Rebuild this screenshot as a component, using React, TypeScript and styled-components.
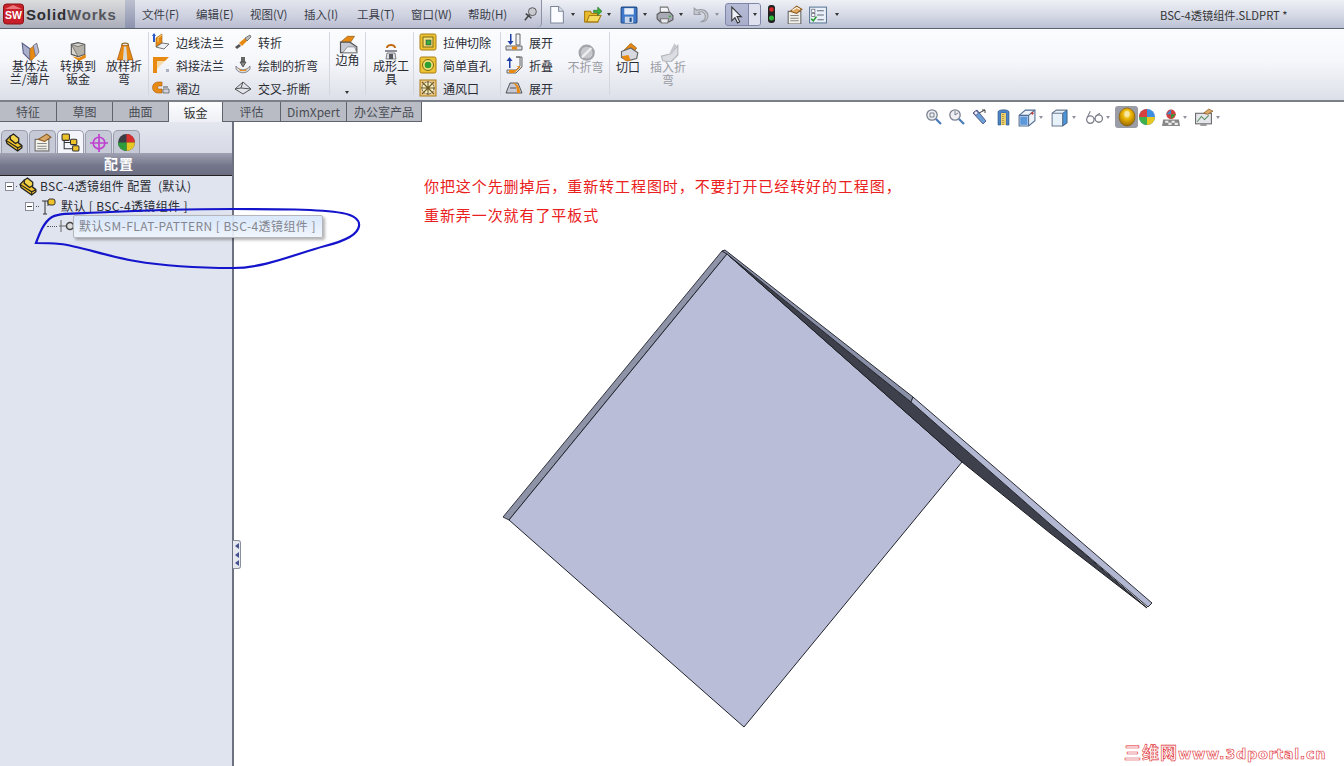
import React from "react";
import styled, { createGlobalStyle } from "styled-components";

const FONT = `"Noto Sans CJK SC", "Liberation Sans", sans-serif`;

const Global = createGlobalStyle`
  html, body { margin: 0; padding: 0; background: #fff; }
  body { font-family: ${FONT}; font-size: 12px; color: #222; }
`;

const Page = styled.div`
  position: relative;
  width: 1344px;
  height: 766px;
  overflow: hidden;
  display: flex;
  flex-direction: column;
  background: #fff;
`;

/* ---------- top bar ---------- */
const TopBar = styled.div`
  height: 28px;
  flex: none;
  display: flex;
  align-items: stretch;
  background: linear-gradient(#eef0f5, #d5d9e6 55%, #bcc2d4);
  border-bottom: 1px solid #5c6470;
`;
const LogoBox = styled.div`
  width: 125px;
  flex: none;
  display: flex;
  align-items: center;
  gap: 2px;
  padding-left: 3px;
  box-sizing: border-box;
  background: linear-gradient(#dcdcde, #bfc1c8 60%, #a9adbb);
`;
const LogoText = styled.span`
  font-family: "Liberation Sans", sans-serif;
  font-size: 15px;
  font-weight: 700;
  letter-spacing: 0.85px;
  color: #55565c;
  & > b {
    color: #2f2f33;
  }
`;
const Divider = styled.div`
  width: 10px;
  flex: none;
  background: linear-gradient(#bcc0d0, #8d93ae);
`;
const MenuStrip = styled.div`
  width: 407px;
  flex: none;
  display: flex;
  align-items: center;
  padding-left: 7px;
  box-sizing: border-box;
  background: linear-gradient(#e4e6ee, #cdd0df 60%, #b9bdd0);
  border-right: 1px solid #8b90a2;
  border-radius: 0 0 5px 0;
`;
const MenuItem = styled.span<{ $w: number }>`
  width: ${(p) => p.$w}px;
  flex: none;
  font-size: 11.5px;
  color: #3a3d48;
  white-space: nowrap;
`;
const QuickBar = styled.div`
  flex: 1;
  display: flex;
  align-items: center;
  padding-left: 5px;
`;
const Slot = styled.span<{ $w: number }>`
  width: ${(p) => p.$w}px;
  flex: none;
  display: flex;
  align-items: center;
  justify-content: flex-start;
`;
const Spacer = styled.span<{ $w?: number }>`
  width: ${(p) => p.$w ?? 5}px;
  flex: none;
`;
const Arrow = styled.span<{ $faint?: boolean }>`
  display: block;
  width: 0;
  height: 0;
  border-left: 2.5px solid transparent;
  border-right: 2.5px solid transparent;
  border-top: 3px solid ${(p) => (p.$faint ? "#8f939f" : "#333")};
  flex: none;
`;
const SelectBtn = styled.span`
  width: 36px;
  height: 23px;
  flex: none;
  display: flex;
  align-items: center;
  box-sizing: border-box;
  border: 1px solid #7f86a8;
  border-radius: 3px;
  background: linear-gradient(#b6bbd6, #a9aecb);
  margin-left: -2px;
  margin-right: 6px;
`;
const SelectArrow = styled.span`
  width: 12px;
  height: 21px;
  margin-left: 3px;
  display: flex;
  align-items: center;
  justify-content: center;
  background: #dfe2ee;
  border-left: 1px solid #7f86a8;
  border-radius: 0 2px 2px 0;
`;
const DocTitle = styled.span`
  position: absolute;
  left: 1160px;
  top: 7px;
  font-size: 11.2px;
  color: #333;
  white-space: nowrap;
`;

/* ---------- ribbon ---------- */
const Ribbon = styled.div`
  height: 73px;
  flex: none;
  display: flex;
  align-items: stretch;
  padding-left: 4px;
  box-sizing: border-box;
  background: linear-gradient(#fbfcfe, #f6f7fb 45%, #dcdfe8);
  border-bottom: 2px solid #7b7f88;
`;
const BigBtn = styled.div<{ $w: number; $off?: boolean; $top?: number; $left?: number }>`
  width: ${(p) => p.$w}px;
  flex: none;
  display: flex;
  flex-direction: column;
  align-items: center;
  padding-top: ${(p) => p.$top ?? 12}px;
  padding-left: ${(p) => p.$left ?? 0}px;
  box-sizing: border-box;
  text-align: center;
  font-size: 12px;
  line-height: 13px;
  color: ${(p) => (p.$off ? "#9a9ca3" : "#2a2c34")};
  position: relative;
`;
const BigLabel = styled.span`
  margin-top: -2px;
`;
const Sep = styled.div<{ $l?: number; $r?: number }>`
  width: 1px;
  flex: none;
  margin: 3px ${(p) => p.$r ?? 0}px 5px ${(p) => p.$l ?? 0}px;
  background: #d4d7e0;
`;
const SmallCol = styled.div<{ $w: number }>`
  width: ${(p) => p.$w}px;
  flex: none;
  display: flex;
  flex-direction: column;
  justify-content: space-between;
  padding: 4px 0 3px;
  box-sizing: border-box;
`;
const SmallRow = styled.div`
  height: 18px;
  display: flex;
  align-items: center;
  gap: 6px;
  font-size: 12px;
  color: #2a2c34;
  white-space: nowrap;
`;
const CornerArrow = styled.span`
  position: absolute;
  bottom: 6px;
  left: 15px;
  display: block;
`;

/* ---------- tabs ---------- */
const TabRow = styled.div`
  height: 20px;
  flex: none;
  display: flex;
  align-items: stretch;
  background: transparent;
  position: relative;
  z-index: 2;
`;
const Tab = styled.div<{ $w: number; $on?: boolean }>`
  width: ${(p) => p.$w}px;
  flex: none;
  box-sizing: border-box;
  display: flex;
  align-items: center;
  justify-content: center;
  font-size: 12px;
  color: ${(p) => (p.$on ? "#333" : "#4a4d55")};
  background: ${(p) => (p.$on ? "linear-gradient(#fdfdfe,#eef0f5)" : "#b9bcc4")};
  border-right: 1px solid #5f636c;
  border-bottom: ${(p) => (p.$on ? "1px solid #8f939c" : "1px solid #5f636c")};
  height: ${(p) => (p.$on ? 21 : 20)}px;
`;

/* ---------- main ---------- */
const Main = styled.div`
  flex: 1;
  display: flex;
  min-height: 0;
`;
const Side = styled.div`
  width: 234px;
  flex: none;
  box-sizing: border-box;
  background: #e0e4ee;
  border-right: 2px solid #6d7180;
  display: flex;
  flex-direction: column;
  position: relative;
  z-index: 3;
`;
const SideTabs = styled.div`
  height: 31px;
  flex: none;
  display: flex;
  align-items: flex-end;
  gap: 1px;
  padding-left: 1px;
  box-sizing: border-box;
  background: linear-gradient(#e5e7ef, #d6d9e4);
`;
const SideTab = styled.div<{ $on?: boolean }>`
  width: 27px;
  height: 23px;
  flex: none;
  display: flex;
  align-items: center;
  justify-content: center;
  box-sizing: border-box;
  border: 1px solid #9a9eae;
  border-bottom: none;
  border-radius: 5px 5px 0 0;
  background: ${(p) => (p.$on ? "#f3f5fa" : "#c6c9d6")};
`;
const SideHeader = styled.div`
  height: 23px;
  flex: none;
  display: flex;
  align-items: center;
  justify-content: center;
  box-sizing: border-box;
  padding: 0 0 2px 6px;
  background: linear-gradient(#a0a2b2, #75788c 55%, #6b6e82);
  border-bottom: 1px solid #222;
  color: #fff;
  font-weight: 700;
  font-size: 14px;
  letter-spacing: 1px;
`;
const Tree = styled.div`
  display: flex;
  flex-direction: column;
`;
const TreeRow = styled.div<{ $indent: number }>`
  height: 20px;
  display: flex;
  align-items: center;
  padding-left: ${(p) => p.$indent}px;
  gap: 2px;
  font-size: 12px;
  color: #2a2c34;
  white-space: pre;
  letter-spacing: 0.35px;
`;
const TreeText = styled.span`
  margin-top: -2px;
`;
const PlusBox = styled.span`
  width: 9px;
  height: 9px;
  box-sizing: border-box;
  border: 1px solid #8a8d98;
  background: #fff;
  display: flex;
  align-items: center;
  justify-content: center;
  flex: none;
  &::after {
    content: "";
    width: 5px;
    height: 1px;
    background: #444;
  }
`;
const Dots = styled.span<{ $w: number }>`
  width: ${(p) => p.$w}px;
  flex: none;
  border-top: 1px dotted #555;
`;
const Tooltip = styled.div`
  position: absolute;
  left: 73px;
  top: 215px;
  width: 250px;
  height: 23px;
  box-sizing: border-box;
  padding: 0 0 2px 5px;
  display: flex;
  align-items: center;
  font-size: 12px;
  letter-spacing: 0.43px;
  color: #83858f;
  white-space: nowrap;
  border: 1px solid #b4b6bc;
  border-radius: 2px;
  background: linear-gradient(rgba(214,230,250,.92), rgba(240,245,252,.92));
  box-shadow: 2px 2px 3px rgba(0,0,0,.3);
  z-index: 5;
`;
const Grip = styled.div`
  position: absolute;
  right: -9px;
  top: 418px;
  width: 8px;
  height: 29px;
  background: #e6e8f0;
  border: 1px solid #8b8f9d;
  border-left: none;
  border-radius: 0 3px 3px 0;
  display: flex;
  flex-direction: column;
  align-items: center;
  justify-content: space-evenly;
  box-sizing: border-box;
`;
const GripArrow = styled.span`
  width: 0;
  height: 0;
  border-top: 3px solid transparent;
  border-bottom: 3px solid transparent;
  border-right: 4px solid #45508c;
`;
const Viewport = styled.div`
  flex: 1;
  position: relative;
  background: #fff;
`;
const HeadsUp = styled.div`
  position: absolute;
  left: 691px;
  top: -16px;
  display: flex;
  align-items: center;
  height: 22px;
`;
const HudSlot = styled.span<{ $w: number; $on?: boolean }>`
  width: ${(p) => p.$w}px;
  height: 22px;
  flex: none;
  display: flex;
  align-items: center;
  gap: 3px;
  box-sizing: border-box;
  ${(p) => p.$on && "background:#9a9ca6; border-radius:3px; justify-content:center;"}
`;
const ModelSvg = styled.svg`
  position: absolute;
  left: -234px;
  top: -122px;
  width: 1344px;
  height: 766px;
`;
const Note = styled.div`
  position: absolute;
  left: 190px;
  top: 50px;
  color: #ea2020;
  font-family: "Noto Sans CJK SC", serif;
  font-size: 15px;
  letter-spacing: 0.92px;
  line-height: 28.5px;
  white-space: nowrap;
`;
const Watermark = styled.div`
  position: absolute;
  left: 890px;
  top: 621px;
  font-family: "DejaVu Sans", sans-serif;
  font-weight: 700;
  font-size: 14.5px;
  letter-spacing: 0.62px;
  line-height: 18px;
  color: #fff;
  -webkit-text-stroke: 0.6px #e02a30;
  white-space: nowrap;
  & > span {
    font-family: "Noto Sans CJK SC", sans-serif;
    font-size: 17px;
    letter-spacing: 1px;
  }
`;
const Scribble = styled.svg`
  position: absolute;
  left: 0;
  top: 0;
  width: 1344px;
  height: 766px;
  pointer-events: none;
  z-index: 6;
`;

/* ---------- drawn icons ---------- */
const Svg: React.FC<{ s?: number; children: React.ReactNode }> = ({ s = 18, children }) => (
  <svg width={s} height={s} viewBox="0 0 18 18" style={{ flex: "none", display: "block" }}>
    {children}
  </svg>
);
const O = "#e88a12";
const Y = "#eec22a";

const SWLogo = () => (
  <svg width="21" height="22" viewBox="0 0 21 22" style={{ flex: "none" }}>
    <rect x="0.5" y="1" width="20" height="20" rx="3" fill="#c8202a" stroke="#8a1216" />
    <path d="M2 6 L10 2 L19 6" fill="#e9767a" />
    <text x="10.5" y="16" textAnchor="middle" fontFamily="Liberation Sans" fontWeight="700" fontSize="10.5" fill="#fff">SW</text>
  </svg>
);
const Pin = () => (
  <Svg s={17}>
    <circle cx="11" cy="6" r="4.2" fill="#c8cad2" stroke="#555" />
    <path d="M8 9 L3 15 M4 8 L10 13" stroke="#444" strokeWidth="1.6" />
  </Svg>
);
const NewDoc = () => (
  <Svg s={19}>
    <path d="M3.5 1.5 H11 L15.5 6 V17 H3.5 Z" fill="#fbfcff" stroke="#7d8798" />
    <path d="M11 1.5 V6 H15.5" fill="#dfe4ee" stroke="#7d8798" />
  </Svg>
);
const OpenFolder = () => (
  <Svg s={19}>
    <path d="M1.5 6 H7 L8.5 8 H14 V16 H1.5 Z" fill="#e9b92e" stroke="#a57d12" />
    <path d="M3.5 16 L6 10 H17 L14 16 Z" fill="#f6db62" stroke="#a57d12" />
    <path d="M10 5 H14 V2 L18 6 L14 10 V7 H10 Z" fill="#3fae3a" stroke="#24742a" strokeWidth=".6" />
  </Svg>
);
const Save = () => (
  <Svg s={19}>
    <rect x="2" y="2" width="15" height="15" rx="1" fill="#3f78c8" stroke="#1f4a88" />
    <rect x="5" y="3" width="9" height="6" fill="#e8eef8" />
    <rect x="5.5" y="11" width="8" height="6" fill="#c8d4e8" />
    <rect x="10" y="12" width="2" height="4" fill="#1f4a88" />
  </Svg>
);
const Printer = () => (
  <Svg s={19}>
    <path d="M5 2 H12 L14 8 H5 Z" fill="#f4f5f8" stroke="#777" />
    <path d="M2 9 L5 7 H14 L17 10 V14 L13 16 H5 L2 13 Z" fill="#a8abb6" stroke="#555" />
    <path d="M5 13 H13 L12 17 H6 Z" fill="#e8eaf0" stroke="#777" />
    <rect x="13" y="10" width="2" height="1.5" fill="#3fae3a" />
  </Svg>
);
const Undo = () => (
  <Svg s={19}>
    <path d="M3 3 V9 H9 L7 7 C10 5.5 13 7 13.5 10 C14 13 12 15 9 16 C14 16 17 13 16 9 C15 5 10 3 5.5 5 Z" fill="#c7c9d0" stroke="#9a9ca4" />
  </Svg>
);
const Cursor = () => (
  <Svg s={19}>
    <path d="M5.5 2 V15 L8.5 12 L11 17 L13 16 L10.5 11 H14.5 Z" fill="#eef0f8" stroke="#333" />
  </Svg>
);
const Light = () => (
  <svg width="9" height="20" viewBox="0 0 9 20" style={{ flex: "none" }}>
    <rect x="1" y="1" width="7" height="18" rx="3" fill="#222" />
    <circle cx="4.5" cy="5.5" r="2.3" fill="#d8262a" />
    <circle cx="4.5" cy="14" r="2.5" fill="#2eb63a" />
  </svg>
);
const Options = () => (
  <Svg s={19}>
    <rect x="3" y="6" width="12" height="12" fill="#f1f0e8" stroke="#666" />
    <path d="M5 10 H13 M5 12.5 H13 M5 15 H13" stroke="#888" />
    <path d="M5 6 L11 1 L16 4 L11 8 Z" fill="#e0a860" stroke="#8a5a20" />
    <path d="M7 5 L11 2.5 L14 4" stroke="#fff" fill="none" />
  </Svg>
);
const Checklist = () => (
  <Svg s={19}>
    <rect x="1.5" y="2" width="16" height="15" fill="#e8f0f8" stroke="#5c7a98" />
    <rect x="3.5" y="4" width="3" height="3" fill="#fff" stroke="#667" strokeWidth=".7" />
    <rect x="3.5" y="8" width="3" height="3" fill="#fff" stroke="#667" strokeWidth=".7" />
    <path d="M3 13 L5 15 L8 11" stroke="#2a9a30" strokeWidth="1.5" fill="none" />
    <path d="M8.5 5.5 H15 M8.5 9.5 H15 M9 14 H15" stroke="#667" />
  </Svg>
);

const BaseFlange = () => (
  <Svg s={20}>
    <path d="M2 2 L9 7 V17 L3 11 Z" fill="#a8aecb" stroke="#5d6288" />
    <path d="M9 7 L15 2 L17 10 L11 17 L9 17 Z" fill={O} stroke="#a86a20" strokeWidth=".5" />
    <path d="M12 4 L15 2 L17 10 L14 14 Z" fill="#b9bdd4" stroke="#5d6288" strokeWidth=".6" />
  </Svg>
);
const Convert = () => (
  <Svg s={20}>
    <path d="M3 3 L9 1.5 L15 3 V12 L9 14 L3 12 Z" fill="#d8d6ce" stroke="#555" />
    <path d="M3 3 L9 5 L15 3 V12 L9 14 Z" fill="#b4b2a8" stroke="#555" strokeWidth=".6" />
    <path d="M4 14 L10 18 L16 15 L16 12 L10 15 Z" fill={O} />
  </Svg>
);
const Loft = () => (
  <Svg s={20}>
    <ellipse cx="10" cy="3.5" rx="3" ry="1.6" fill="#f0f0e8" stroke="#8a6a30" />
    <path d="M7 4 L3 17 H17 L13 4 Z" fill={O} stroke="#a85a10" strokeWidth=".7" />
    <path d="M9 5 L8 17 H12 L11 5 Z" fill="#d8d8d4" />
  </Svg>
);
const EdgeFlange = () => (
  <Svg>
    <path d="M2 0 L4 3 H3 V9 H1 V3 H0 Z" fill="#2a58c8" />
    <path d="M4 5 L10 1 V10 L4 14 Z" fill={O} stroke="#9a5a10" strokeWidth=".6" />
    <path d="M10 2 L6 5 V9" stroke="#f8d070" fill="none" />
    <path d="M4 14 L10 10 L17 11 L12 16 Z" fill="#eef0f4" stroke="#555" strokeWidth=".8" />
  </Svg>
);
const MiterFlange = () => (
  <Svg>
    <path d="M1 1 H17 L13 5 H5 V17 H1 Z" fill={O} />
    <path d="M5 5 H13 L5 13 Z" fill="#f5d9a8" />
    <path d="M14 13 L17 13 L17 16 L14 16 Z" fill="#aab0c0" />
  </Svg>
);
const Hem = () => (
  <Svg>
    <path d="M10 3 H6 A5.5 5.5 0 0 0 6 14 H10 V10 H6.5 A1.8 1.8 0 0 1 6.5 7 H10 Z" fill={O} stroke="#a85a10" strokeWidth=".6" />
    <path d="M11 10 H17 V14 H11 Z" fill="#cfd2dc" stroke="#555" strokeWidth=".7" />
    <path d="M11 8 H16" stroke="#555" />
  </Svg>
);
const Jog = () => (
  <Svg>
    <path d="M1 14 L5 11 L7 13 L3 16 Z" fill="#555" />
    <path d="M5 10 L11 5 L13 8 L8 13 Z" fill={O} />
    <path d="M11 5 L16 2 L17 4 L13 8 Z" fill="#bbb" stroke="#555" strokeWidth=".7" />
  </Svg>
);
const SketchedBend = () => (
  <Svg>
    <rect x="7" y="1" width="4" height="5" fill="#666" />
    <path d="M6 6 H12 L9 11 Z" fill="#888" stroke="#333" strokeWidth=".7" />
    <path d="M2 10 C5 15 13 15 16 10 L16 13 C13 18 5 18 2 13 Z" fill="#d7dbe4" stroke="#666" strokeWidth=".7" />
    <path d="M5 12 C7 15 11 15 13 12 L12 15 H6 Z" fill={O} />
  </Svg>
);
const CrossBreak = () => (
  <Svg>
    <path d="M1 10 L9 3 L17 10 L9 15 Z" fill="#e2e4ec" stroke="#555" />
    <path d="M9 3 L7 9 L17 10 M7 9 L1 10" stroke="#555" fill="none" />
  </Svg>
);
const Corners = () => (
  <Svg s={21}>
    <path d="M3 7 L9 2 H15 L11 8 Z" fill={O} stroke="#8a5a10" strokeWidth=".6" />
    <path d="M3 7 H11 L17 11 V16 H3 Z" fill="#c6c8d4" stroke="#555" />
    <path d="M5 16 L9 11 H15 L17 16 Z" fill="#f1f2f6" stroke="#777" strokeWidth=".6" />
  </Svg>
);
const Forming = () => (
  <Svg>
    <path d="M5 5 A4 3 0 0 1 13 5" stroke="#c06a10" strokeWidth="2" fill="none" />
    <path d="M3 7 H15 V9 H3 Z" fill="#8d909a" />
    <path d="M5 10 H13 L14 16 H4 Z" fill="#dfe1e8" stroke="#555" strokeWidth=".7" />
    <rect x="7" y="11" width="4" height="5" fill="#55585f" />
  </Svg>
);
const ExtrudeCut = () => (
  <Svg>
    <rect x="1" y="1" width="16" height="16" rx="1.5" fill="#edc234" stroke="#a67c10" />
    <rect x="4" y="4" width="10" height="10" fill="#f3e07a" stroke="#7c6a10" />
    <rect x="7" y="7" width="5" height="5" fill="#3caa3a" stroke="#235" strokeWidth=".5" />
  </Svg>
);
const SimpleHole = () => (
  <Svg>
    <rect x="1" y="1" width="16" height="16" rx="1.5" fill="#edc234" stroke="#a67c10" />
    <circle cx="9" cy="9" r="5.5" fill="#f3e07a" stroke="#7c6a10" />
    <circle cx="9" cy="9" r="3.3" fill="#2ea032" />
  </Svg>
);
const Vent = () => (
  <Svg>
    <rect x="1" y="1" width="16" height="16" fill="#eec88a" stroke="#a67c10" />
    <circle cx="9" cy="9" r="6" fill="#f6efc8" stroke="#555" strokeDasharray="2 1" />
    <path d="M3 3 L15 15 M15 3 L3 15 M9 2 V16 M2 9 H16" stroke="#6d5a20" strokeWidth="1.1" />
  </Svg>
);
const Unfold = () => (
  <Svg>
    <path d="M5 1 V8 H2.5 L5.5 12 L8.5 8 H6.5 V1 Z" fill="#1e3fa8" />
    <path d="M11 1 H15 V12 H11 Z" fill="#f1f2f6" stroke="#666" />
    <path d="M1 13 H17 V17 H1 Z" fill="#d8dae2" stroke="#666" />
    <rect x="7" y="13.5" width="5" height="3" fill={O} />
  </Svg>
);
const Fold = () => (
  <Svg>
    <path d="M4 12 V5 H1.5 L4.5 1 L7.5 5 H5.5 V12 Z" fill="#1e3fa8" />
    <path d="M11 1 H15 V10 L11 14 H2 V17 H11 L17 11 V1 Z" fill="#e4e6ee" stroke="#666" />
    <path d="M11 10 L15 10 L11 14 H4 V17 H9 L16 11 Z" fill={O} />
  </Svg>
);
const Unfold2 = () => (
  <Svg>
    <path d="M1 14 L5 4 H13 L17 14 Z" fill="#c7cad6" stroke="#555" />
    <path d="M7 4 C11 5 12 9 12 14 H15 C15 9 13 5 9 4 Z" fill={O} />
    <path d="M5 9 H11" stroke="#555" />
  </Svg>
);
const NoBend = () => (
  <Svg s={21}>
    <path d="M3 10 L10 3 L17 9 L10 17 Z" fill="#c6c8ce" />
    <circle cx="10" cy="10" r="6" fill="none" stroke="#a3a5ab" strokeWidth="2" />
    <path d="M6 14 L14 6" stroke="#eee" strokeWidth="2" />
  </Svg>
);
const Rip = () => (
  <Svg s={21}>
    <path d="M5 8 L11 2 L16 6 L12 11 Z" fill={O} stroke="#8a5a10" strokeWidth=".6" />
    <path d="M3 9 L11 6 L17 10 L16 15 L8 17 L3 14 Z" fill="#d8d9e0" stroke="#666" />
    <path d="M3 13 L9 12 L11 17 L6 17 Z" fill={O} />
  </Svg>
);
const InsertBend = () => (
  <Svg s={21}>
    <path d="M3 13 L11 11 L17 4 L17 12 L11 18 L4 17 Z" fill="#dcdde2" stroke="#b4b6bc" />
    <path d="M10 10 L14 2 L16 4 L12 11 Z" fill="#c6c8d0" />
  </Svg>
);
const TreeIcon = ({ s = 19 }: { s?: number }) => (
  <Svg s={s}>
    <path d="M1 7 L5 3 L16 12 V14 L12 17 L2 10 Z" fill={Y} stroke="#222" strokeWidth="1.2" />
    <path d="M5 3 L8 1 L13 5 V8 L10 10 L5 6 Z" fill="#f4d44a" stroke="#222" strokeWidth="1.2" />
    <path d="M1 7 L12 14 L16 12 M12 14 V17" fill="none" stroke="#222" />
  </Svg>
);
const PropIcon = () => (
  <Svg s={19}>
    <rect x="2" y="6" width="13" height="11" fill="#f4f3ea" stroke="#666" />
    <path d="M4 10 H13 M4 12.5 H13 M4 15 H13" stroke="#888" />
    <path d="M5 6 L13 1 L17 4 L11 8 Z" fill="#d8a868" stroke="#8a5a20" />
  </Svg>
);
const ConfigIcon = ({ s = 19 }: { s?: number }) => (
  <Svg s={s}>
    <path d="M3 4 V15 H11 M3 9 H11" stroke="#333" fill="none" />
    <rect x="1" y="1" width="7" height="6" rx="1" fill={Y} stroke="#333" />
    <rect x="9" y="6" width="6" height="5" rx="1" fill={Y} stroke="#333" />
    <rect x="11" y="12" width="6" height="5" rx="1" fill={Y} stroke="#333" />
  </Svg>
);
const Crosshair = () => (
  <Svg s={19}>
    <circle cx="9.5" cy="9.5" r="5.5" fill="none" stroke="#c040d0" strokeWidth="1.6" />
    <path d="M9.5 1 V18 M1 9.5 H18" stroke="#c040d0" strokeWidth="1.6" />
  </Svg>
);
const ColorBall = ({ s = 19 }: { s?: number }) => (
  <Svg s={s}>
    <circle cx="9" cy="9" r="8" fill="#3c3c44" />
    <path d="M9 1 A8 8 0 0 1 17 9 L9 9 Z" fill="#d83030" />
    <path d="M17 9 A8 8 0 0 1 9 17 L9 9 Z" fill="#e6c820" />
    <path d="M9 17 A8 8 0 0 1 1 9 L9 9 Z" fill="#2e9c3a" />
  </Svg>
);
const BrightBall = () => (
  <Svg s={18}>
    <circle cx="9" cy="9" r="8" fill="#3f8fe0" />
    <path d="M9 1 A8 8 0 0 0 1 9 L9 9 Z" fill="#d84040" />
    <path d="M17 9 A8 8 0 0 1 9 17 L9 9 Z" fill="#e6c820" />
    <path d="M9 17 A8 8 0 0 1 1 9 L9 9 Z" fill="#3fb04a" />
  </Svg>
);
const DefaultCfg = () => (
  <svg width="15" height="17" viewBox="0 0 15 17" style={{ flex: "none" }}>
    <path d="M1 3 H7 M4 3 V16 M2 16 H6" stroke="#333" fill="none" />
    <path d="M7 3 V8" stroke="#333" />
    <rect x="7" y="1" width="7" height="6" rx="2" fill={Y} stroke="#333" />
  </svg>
);
const SubCfg = () => (
  <svg width="16" height="14" viewBox="0 0 16 14" style={{ flex: "none" }}>
    <path d="M2 1 V13" stroke="#666" />
    <path d="M0 7 H8" stroke="#666" />
    <circle cx="11" cy="7" r="3.5" fill="#ddd" stroke="#444" strokeWidth="1.5" />
  </svg>
);

/* heads-up view icons */
const Magnifier = ({ inner }: { inner?: React.ReactNode }) => (
  <Svg s={18}>
    <circle cx="7" cy="7" r="5.2" fill="#eef0f4" stroke="#7a808e" strokeWidth="1.3" />
    {inner}
    <path d="M11 11 L16 16" stroke="#4a7ab8" strokeWidth="2.2" />
  </Svg>
);
const PrevView = () => (
  <Svg s={18}>
    <path d="M2 5 L6 2 L15 13 L12 16 Z" fill="#6ea0d8" stroke="#336" strokeWidth=".7" />
    <path d="M8 5 L14 2 M14 2 L11 2 M14 2 L14 5" stroke="#444" fill="none" />
    <circle cx="5" cy="5" r="2" fill="#eef" stroke="#336" strokeWidth=".6" />
  </Svg>
);
const Section = () => (
  <Svg s={18}>
    <path d="M3 4 C3 1 14 1 14 4 V17 H11 V5 H6 V17 H3 Z" fill="#4e84c4" stroke="#27527e" strokeWidth=".6" />
    <path d="M6 5 H11 V17 H6 Z" fill="#e9cf70" />
    <path d="M8 6 V17" stroke="#8a6a10" strokeDasharray="1 1" />
  </Svg>
);
const ViewOrient = () => (
  <Svg s={19}>
    <path d="M2 7 L8 2 H17 V12 L11 17 H2 Z" fill="#eef3fa" stroke="#4e6a90" />
    <path d="M2 7 H11 V17 M11 7 L17 2" stroke="#4e6a90" fill="none" />
    <path d="M3 8 H10 V16 H3 Z" fill="#5d98da" />
    <path d="M13 5 H16 M14.5 3.5 V6.5" stroke="#c83030" />
  </Svg>
);
const Cube = () => (
  <Svg s={19}>
    <path d="M2 5 L6 2 H16 V14 L12 17 H2 Z" fill="#e8f2fb" stroke="#6a7a90" />
    <path d="M12 5 L16 2 V14 L12 17 Z" fill="#4e94d8" stroke="#27527e" strokeWidth=".6" />
    <path d="M2 5 H12 V17" stroke="#6a7a90" fill="none" />
  </Svg>
);
const Glasses = () => (
  <Svg s={19}>
    <circle cx="6" cy="11" r="3.5" fill="#fff" stroke="#7a7d88" strokeWidth="1.2" />
    <circle cx="14" cy="10" r="3.5" fill="#fff" stroke="#7a7d88" strokeWidth="1.2" />
    <path d="M9.5 10 H10.5 M3 9 L6 3 M11 8 L15 5" stroke="#7a7d88" fill="none" />
  </Svg>
);
const GoldBall = () => (
  <svg width="18" height="20" viewBox="0 0 18 20" style={{ flex: "none" }}>
    <defs>
      <radialGradient id="gb" cx="50%" cy="35%" r="65%">
        <stop offset="0" stopColor="#fff3a0" />
        <stop offset=".45" stopColor="#e8b000" />
        <stop offset="1" stopColor="#9a6a00" />
      </radialGradient>
    </defs>
    <ellipse cx="9" cy="10" rx="8" ry="9" fill="url(#gb)" stroke="#7a5200" strokeWidth=".6" />
    <ellipse cx="9" cy="7" rx="2.5" ry="3" fill="#f8e8a8" />
  </svg>
);
const Scene = () => (
  <Svg s={19}>
    <circle cx="9.5" cy="6" r="4.5" fill="#d04040" />
    <path d="M5 6 L9.5 1.5 V6 Z" fill="#3c8ad0" />
    <path d="M9.5 6 H14 L9.5 10.5 Z" fill="#2e9c3a" />
    <path d="M2 11 H17 L18 17 H1 Z" fill="#888" />
    <path d="M4 12 H7 V14 H4 Z M10 12 H13 V14 H10 Z M7 14 H10 V16 H7 Z M13 14 H16 V16 H13 Z" fill="#eee" />
  </Svg>
);
const Display = () => (
  <Svg s={19}>
    <rect x="1.5" y="5" width="15" height="10" fill="#e4e6ec" stroke="#666" />
    <path d="M3 13 L7 8 L10 11 L14 7" stroke="#5a8a5a" fill="none" />
    <path d="M6 15 H12 V17 H6 Z" fill="#999" />
    <path d="M9 5 L14 1 L18 3 L13 6 Z" fill="#d8a868" stroke="#8a5a20" strokeWidth=".7" />
  </Svg>
);

const menus: [string, number][] = [
  ["文件(F)", 54], ["编辑(E)", 54], ["视图(V)", 54], ["插入(I)", 53],
  ["工具(T)", 54], ["窗口(W)", 57], ["帮助(H)", 54],
];
const tabs: [string, number, boolean?][] = [
  ["特征", 57], ["草图", 56], ["曲面", 56], ["钣金", 54, true], ["评估", 58], ["DimXpert", 66], ["办公室产品", 75],
];

export default function App() {
  return (
    <Page>
      <Global />
      <TopBar>
        <LogoBox>
          <SWLogo />
          <LogoText><b>Solid</b>Works</LogoText>
        </LogoBox>
        <Divider />
        <MenuStrip>
          {menus.map(([t, w]) => (
            <MenuItem key={t} $w={w}>{t}</MenuItem>
          ))}
          <Pin />
        </MenuStrip>
        <QuickBar>
          <Slot $w={36}><NewDoc /><Spacer /><Arrow /></Slot>
          <Slot $w={36}><OpenFolder /><Spacer /><Arrow /></Slot>
          <Slot $w={36}><Save /><Spacer /><Arrow /></Slot>
          <Slot $w={36}><Printer /><Spacer /><Arrow /></Slot>
          <Slot $w={36}><Undo /><Spacer /><Arrow $faint /></Slot>
          <SelectBtn>
            <Cursor />
            <SelectArrow><Arrow /></SelectArrow>
          </SelectBtn>
          <Slot $w={18}><Light /></Slot>
          <Slot $w={23}><Options /></Slot>
          <Slot $w={32}><Checklist /><Spacer $w={8} /><Arrow /></Slot>
        </QuickBar>
        <DocTitle>BSC-4透镜组件.SLDPRT *</DocTitle>
      </TopBar>

      <Ribbon>
        <BigBtn $w={52}><BaseFlange /><BigLabel>基体法<br />兰/薄片</BigLabel></BigBtn>
        <BigBtn $w={44}><Convert /><BigLabel>转换到<br />钣金</BigLabel></BigBtn>
        <BigBtn $w={48}><Loft /><BigLabel>放样折<br />弯</BigLabel></BigBtn>
        <Sep $r={3} />
        <SmallCol $w={82}>
          <SmallRow><EdgeFlange />边线法兰</SmallRow>
          <SmallRow><MiterFlange />斜接法兰</SmallRow>
          <SmallRow><Hem />褶边</SmallRow>
        </SmallCol>
        <SmallCol $w={95}>
          <SmallRow><Jog />转折</SmallRow>
          <SmallRow><SketchedBend />绘制的折弯</SmallRow>
          <SmallRow><CrossBreak />交叉-折断</SmallRow>
        </SmallCol>
        <Sep />
        <BigBtn $w={35} $top={5}>
          <Corners />
          <BigLabel>边角</BigLabel>
          <CornerArrow><Arrow /></CornerArrow>
        </BigBtn>
        <Sep />
        <BigBtn $w={47} $top={14} $left={3}><Forming /><BigLabel>成形工<br />具</BigLabel></BigBtn>
        <Sep $r={5} />
        <SmallCol $w={81}>
          <SmallRow><ExtrudeCut />拉伸切除</SmallRow>
          <SmallRow><SimpleHole />简单直孔</SmallRow>
          <SmallRow><Vent />通风口</SmallRow>
        </SmallCol>
        <Sep $r={4} />
        <SmallCol $w={47}>
          <SmallRow><Unfold />展开</SmallRow>
          <SmallRow><Fold />折叠</SmallRow>
          <SmallRow><Unfold2 />展开</SmallRow>
        </SmallCol>
        <BigBtn $w={57} $off $top={12} $left={10}><NoBend /><BigLabel>不折弯</BigLabel></BigBtn>
        <Sep />
        <BigBtn $w={36} $top={12}><Rip /><BigLabel>切口</BigLabel></BigBtn>
        <BigBtn $w={44} $off $top={12}><InsertBend /><BigLabel>插入折<br />弯</BigLabel></BigBtn>
      </Ribbon>

      <TabRow>
        {tabs.map(([t, w, on]) => (
          <Tab key={t} $w={w} $on={on}>{t}</Tab>
        ))}
      </TabRow>

      <Main>
        <Side>
          <SideTabs>
            <SideTab><TreeIcon /></SideTab>
            <SideTab><PropIcon /></SideTab>
            <SideTab $on><ConfigIcon /></SideTab>
            <SideTab><Crosshair /></SideTab>
            <SideTab><ColorBall /></SideTab>
          </SideTabs>
          <SideHeader>配置</SideHeader>
          <Tree>
            <TreeRow $indent={5}>
              <PlusBox /><Dots $w={1} /><TreeIcon /><TreeText>BSC-4透镜组件 配置  (默认)</TreeText>
            </TreeRow>
            <TreeRow $indent={25}>
              <PlusBox /><Dots $w={3} /><DefaultCfg /><TreeText> 默认 [ BSC-4透镜组件 ]</TreeText>
            </TreeRow>
            <TreeRow $indent={47}>
              <Dots $w={10} /><SubCfg />
            </TreeRow>
          </Tree>
          <Grip><GripArrow /><GripArrow /><GripArrow /></Grip>
        </Side>
        <Viewport>
          <ModelSvg viewBox="0 0 1344 766">
            <polygon points="503,517 722,251 727,254 509,520" fill="#8e93a8" stroke="#33363f" strokeWidth="1" />
            <polygon points="509,520 727,254 962,462 744,727" fill="#b9bdd8" stroke="#22242c" strokeWidth="1" />
            <polygon points="727,254 962,462 1050,533 1147,608 1050,524 911,402" fill="#3e414c" stroke="#1c1e24" strokeWidth="1" />
            <polygon points="722,251 725,250 913,397 911,402 727,254" fill="#8a90a8" stroke="#2a2c34" strokeWidth="1" />
            <polygon points="913,397 1152,603 1148,607 1050,524 911,402" fill="#b2b7d2" stroke="#2a2c34" strokeWidth="1" />
          </ModelSvg>
          <HeadsUp>
            <HudSlot $w={23}><Magnifier inner={<path d="M5 5 H9 V9 H5 Z" fill="none" stroke="#7a808e" />} /></HudSlot>
            <HudSlot $w={23}><Magnifier inner={<path d="M7 3 V7 L10 5" fill="none" stroke="#7a808e" />} /></HudSlot>
            <HudSlot $w={24}><PrevView /></HudSlot>
            <HudSlot $w={22}><Section /></HudSlot>
            <HudSlot $w={33}><ViewOrient /><Arrow $faint /></HudSlot>
            <HudSlot $w={34}><Cube /><Arrow $faint /></HudSlot>
            <HudSlot $w={31}><Glasses /><Arrow $faint /></HudSlot>
            <HudSlot $w={23} $on><GoldBall /></HudSlot>
            <HudSlot $w={23}><BrightBall /></HudSlot>
            <HudSlot $w={33}><Scene /><Arrow $faint /></HudSlot>
            <HudSlot $w={28}><Display /><Arrow $faint /></HudSlot>
          </HeadsUp>
          <Note>
            你把这个先删掉后，重新转工程图时，不要打开已经转好的工程图，<br />
            重新弄一次就有了平板式
          </Note>
          <Watermark><span>三维网</span>www.3dportal.cn</Watermark>
        </Viewport>
      </Main>

      <Tooltip>默认SM-FLAT-PATTERN [ BSC-4透镜组件 ]</Tooltip>
      <Scribble viewBox="0 0 1344 766">
        <path
          d="M36 243 C40 232 44 222 52 217 C62 212 80 214 110 212 C150 210 195 209 233 209 C275 209 320 209 342 213 C354 215 360 220 359 226 C358 234 345 241 325 246 C295 254 265 268 233 268 C205 268 170 267 135 261 C105 256 80 246 60 244 C50 243 42 243 36 243 Z"
          fill="none"
          stroke="#1414cc"
          strokeWidth="2.2"
        />
      </Scribble>
    </Page>
  );
}
